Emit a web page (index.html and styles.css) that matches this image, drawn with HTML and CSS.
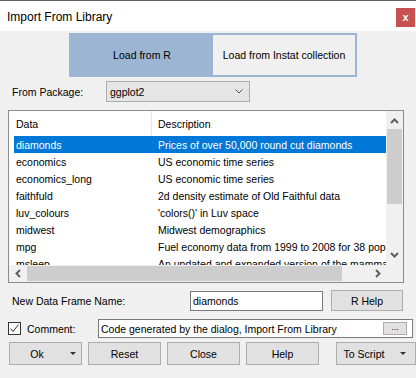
FILE: index.html
```html
<!DOCTYPE html>
<html>
<head>
<meta charset="utf-8">
<link rel="stylesheet" href="styles.css">
</head>
<body>
<div class="window">
  <div class="topline"></div>
  <div class="titlebar">
    <div class="title">Import From Library</div>
    <div class="close">x</div>
  </div>

  <div class="toggle">
    <div class="tg active">Load from R</div>
    <div class="tg">Load from Instat collection</div>
  </div>

  <div class="pkg">
    <div class="pkg-label">From Package:</div>
    <div class="combo">
      <span>ggplot2</span>
      <svg class="chev" width="8" height="5" viewBox="0 0 8 5"><polyline points="0.5,0.5 4,4 7.5,0.5" fill="none" stroke="#555" stroke-width="1"/></svg>
    </div>
  </div>

  <div class="list">
    <div class="content">
      <div class="hdr">
        <div class="h1">Data</div>
        <div class="h2">Description</div>
      </div>
      <div class="row sel"><div class="c1">diamonds</div><div class="c2">Prices of over 50,000 round cut diamonds</div></div>
      <div class="row"><div class="c1">economics</div><div class="c2">US economic time series</div></div>
      <div class="row"><div class="c1">economics_long</div><div class="c2">US economic time series</div></div>
      <div class="row"><div class="c1">faithfuld</div><div class="c2">2d density estimate of Old Faithful data</div></div>
      <div class="row"><div class="c1">luv_colours</div><div class="c2">'colors()' in Luv space</div></div>
      <div class="row"><div class="c1">midwest</div><div class="c2">Midwest demographics</div></div>
      <div class="row"><div class="c1">mpg</div><div class="c2">Fuel economy data from 1999 to 2008 for 38 popular models of cars</div></div>
      <div class="row"><div class="c1">msleep</div><div class="c2">An updated and expanded version of the mammals sleep dataset</div></div>
    </div>
    <div class="vscroll">
      <div class="sb-btn up"><svg width="9" height="6" viewBox="0 0 9 6"><polyline points="1,5 4.5,1.5 8,5" fill="none" stroke="#606060" stroke-width="2"/></svg></div>
      <div class="vthumb"></div>
      <div class="spacer"></div>
      <div class="sb-btn down"><svg width="9" height="6" viewBox="0 0 9 6"><polyline points="1,1 4.5,4.5 8,1" fill="none" stroke="#606060" stroke-width="2"/></svg></div>
    </div>
    <div class="hscroll">
      <div class="sb-btn side"><svg width="6" height="9" viewBox="0 0 6 9"><polyline points="5,1 1.5,4.5 5,8" fill="none" stroke="#606060" stroke-width="2"/></svg></div>
      <div class="hthumb"></div>
      <div class="spacer"></div>
      <div class="sb-btn side"><svg width="6" height="9" viewBox="0 0 6 9"><polyline points="1,1 4.5,4.5 1,8" fill="none" stroke="#606060" stroke-width="2"/></svg></div>
    </div>
    <div class="corner"></div>
  </div>

  <div class="namerow">
    <div class="name-label">New Data Frame Name:</div>
    <div class="textbox">diamonds</div>
    <div class="btn rhelp">R Help</div>
  </div>

  <div class="commentrow">
    <div class="check"><svg width="11" height="11" viewBox="0 0 11 11"><polyline points="1.5,5.5 4,8.5 9.5,1.5" fill="none" stroke="#333" stroke-width="1"/></svg></div>
    <div class="comment-label">Comment:</div>
    <div class="ctext">
      <span class="ctext-val">Code generated by the dialog, Import From Library</span>
      <div class="btn dots">...</div>
    </div>
  </div>

  <div class="btnrow">
    <div class="btn bbtn split"><span class="lbl">Ok</span><span class="dd"><span class="tri"></span></span></div>
    <div class="btn bbtn">Reset</div>
    <div class="btn bbtn">Close</div>
    <div class="btn bbtn">Help</div>
    <div class="btn bbtn split toscript"><span class="lbl">To Script</span><span class="dd"><span class="tri"></span></span></div>
  </div>
</div>
</body>
</html>
```

FILE: styles.css
```css
body {
  margin: 0;
  font-family: "Liberation Sans", Arial, sans-serif;
  font-size: 10.5px;
  color: #000;
}

.window {
  width: 416px;
  height: 378px;
  background: #f0f0f0;
  overflow: hidden;
}

.topline {
  height: 1px;
  background: #646464;
}

.titlebar {
  height: 30px;
  background: #fff;
  display: flex;
  align-items: flex-start;
}

.title {
  font-size: 12px;
  line-height: 14px;
  margin: 9px 0 0 7px;
}

.close {
  margin: 7px 1px 0 auto;
  width: 19px;
  height: 19px;
  background: #c75050;
  color: #fff;
  font-weight: bold;
  font-size: 11px;
  line-height: 1;
  display: flex;
  align-items: center;
  justify-content: center;
}

.toggle {
  margin: 2px 0 0 69px;
  width: 288px;
  height: 44px;
  box-sizing: border-box;
  border: 2px solid #9bb5d3;
  display: flex;
}

.tg {
  flex: 1;
  display: flex;
  align-items: center;
  justify-content: center;
}

.tg.active {
  background: #9bb5d3;
}

.pkg {
  display: flex;
  align-items: center;
  margin-top: 4px;
  height: 21px;
  padding-left: 12px;
}

.pkg-label {
  width: 94px;
}

.combo {
  width: 144px;
  height: 21px;
  box-sizing: border-box;
  border: 1px solid #adadad;
  background: #e5e5e5;
  display: flex;
  align-items: center;
  padding-left: 3px;
}

.chev {
  margin-left: auto;
  margin-right: 6px;
}

.list {
  margin: 8px 0 0 8px;
  width: 396px;
  height: 173px;
  box-sizing: border-box;
  border: 1px solid #8c8c8c;
  background: #fff;
  display: grid;
  grid-template-columns: 1fr 17px;
  grid-template-rows: 1fr 17px;
}

.content {
  overflow: hidden;
  min-width: 0;
}

.hdr {
  display: flex;
  height: 25px;
}

.h1 {
  width: 143px;
  box-sizing: border-box;
  padding-left: 7px;
  border-right: 1px solid #e5e5e5;
  display: flex;
  align-items: center;
}

.h2 {
  padding-left: 6px;
  display: flex;
  align-items: center;
}

.row {
  display: flex;
  height: 17px;
  align-items: center;
  margin-left: 5px;
  white-space: nowrap;
}

.row.sel {
  background: #0078d7;
  color: #fff;
}

.c1 {
  flex: none;
  width: 138px;
  box-sizing: border-box;
  padding-left: 2px;
}

.c2 {
  flex: 1;
  min-width: 0;
  overflow: hidden;
  padding-left: 6px;
}

.vscroll {
  grid-row: 1;
  grid-column: 2;
  background: #f0f0f0;
  display: flex;
  flex-direction: column;
}

.sb-btn {
  flex: none;
  display: flex;
  align-items: center;
  justify-content: center;
}

.sb-btn.up {
  height: 17px;
  padding-top: 3px;
  box-sizing: border-box;
}

.sb-btn.down {
  height: 17px;
  padding-bottom: 3px;
  box-sizing: border-box;
}

.sb-btn.side {
  width: 17px;
}

.vthumb {
  margin: 1px 1px 0;
  height: 75px;
  background: #cdcdcd;
}

.spacer {
  flex: 1;
}

.hscroll {
  grid-row: 2;
  grid-column: 1;
  background: #f0f0f0;
  display: flex;
}

.hthumb {
  margin: 1px 0 1px 1px;
  width: 315px;
  background: #cdcdcd;
}

.corner {
  grid-row: 2;
  grid-column: 2;
  background: #f0f0f0;
}

.namerow {
  display: flex;
  align-items: center;
  margin-top: 7px;
  height: 21px;
  padding-left: 12px;
}

.name-label {
  width: 178px;
}

.textbox {
  width: 133px;
  height: 20px;
  box-sizing: border-box;
  border: 1px solid #7a7a7a;
  background: #fff;
  padding-left: 2px;
  display: flex;
  align-items: center;
}

.btn {
  box-sizing: border-box;
  border: 1px solid #adadad;
  background: #e1e1e1;
  display: flex;
  align-items: center;
  justify-content: center;
}

.rhelp {
  width: 72px;
  height: 21px;
  margin-left: 8px;
}

.commentrow {
  display: flex;
  align-items: center;
  margin-top: 8px;
  height: 19px;
  padding-left: 8px;
}

.check {
  width: 13px;
  height: 13px;
  box-sizing: border-box;
  border: 1px solid #333;
  background: #fff;
  display: flex;
}

.comment-label {
  margin-left: 6px;
  width: 71px;
}

.ctext {
  width: 315px;
  height: 19px;
  box-sizing: border-box;
  border: 1px solid #7a7a7a;
  background: #fff;
  padding-left: 2px;
  display: flex;
  align-items: center;
}

.ctext-val {
  white-space: nowrap;
  overflow: hidden;
}

.dots {
  margin-left: auto;
  margin-right: 5px;
  width: 24px;
  height: 13px;
  font-size: 9px;
  line-height: 1;
  padding-bottom: 3px;
}

.btnrow {
  display: flex;
  margin-top: 4px;
  padding-left: 9px;
  gap: 6px;
}

.bbtn {
  width: 73px;
  height: 23px;
}

.split {
  justify-content: flex-start;
}

.split .lbl {
  flex: 0 0 54px;
  text-align: center;
}

.split .dd {
  flex: 1;
  display: flex;
  justify-content: center;
}

.tri {
  width: 0;
  height: 0;
  border-left: 3px solid transparent;
  border-right: 3px solid transparent;
  border-top: 3px solid #333;
}

.toscript {
  width: 80px;
  margin-left: 11px;
}
```
